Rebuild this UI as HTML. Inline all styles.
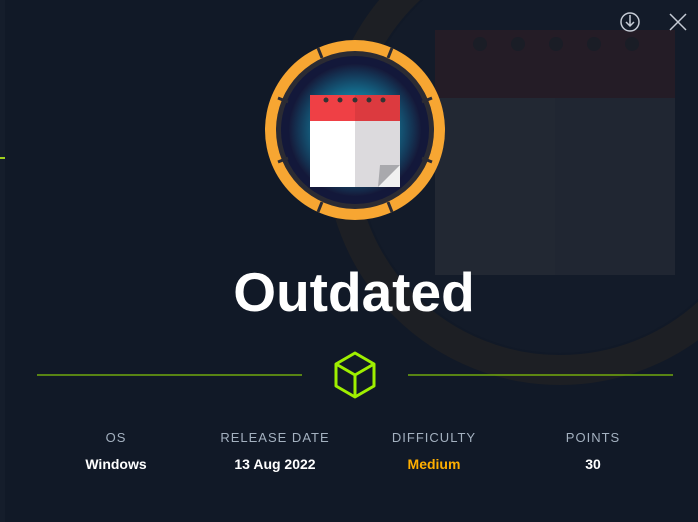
<!DOCTYPE html>
<html><head><meta charset="utf-8"><style>
html,body{margin:0;padding:0;width:698px;height:522px;overflow:hidden;background:#111927;font-family:"Liberation Sans",sans-serif}
.abs{position:absolute}
.lab{position:absolute;top:430px;width:160px;text-align:center;font-family:"Liberation Sans Narrow","Liberation Sans",sans-serif;font-size:13px;letter-spacing:1px;color:#a4b1c0}
.val{position:absolute;top:456px;width:160px;text-align:center;font-family:"Liberation Sans Narrow","Liberation Sans",sans-serif;font-size:14px;font-weight:bold;color:#fff}
</style></head><body>
<svg class="abs" style="left:0;top:0" width="698" height="522">
<defs>
<radialGradient id="glow" cx="50%" cy="50%" r="50%">
<stop offset="0" stop-color="#3fd6e8"/><stop offset="0.5" stop-color="#137a9a"/><stop offset="1" stop-color="#151a3a"/>
</radialGradient>
</defs>
<rect x="0" y="0" width="5" height="522" fill="#151d2b"/>
<rect x="0" y="157" width="5" height="2" fill="#9fcf1c"/>
<circle cx="560" cy="150" r="220" fill="none" stroke="#1d1f24" stroke-width="30"/>
<circle cx="560" cy="150" r="203" fill="#131b29"/>
<rect x="435" y="30" width="240" height="245" fill="#222833"/>
<rect x="435" y="30" width="240" height="68" fill="#241c26"/>
<rect x="555" y="98" width="120" height="177" fill="#202632"/>
<g fill="#1a1d26"><circle cx="480" cy="44" r="7"/><circle cx="518" cy="44" r="7"/><circle cx="556" cy="44" r="7"/><circle cx="594" cy="44" r="7"/><circle cx="632" cy="44" r="7"/></g>
<circle cx="355" cy="130" r="90" fill="#f7a632"/>
<circle cx="355" cy="130" r="79" fill="#2b2b33"/>
<circle cx="355" cy="130" r="74" fill="#13183a"/>
<circle cx="355" cy="130" r="66" fill="url(#glow)"/>
<g stroke="#2b2b33" stroke-width="3">
<line x1="318" y1="48" x2="322" y2="58"/><line x1="392" y1="48" x2="388" y2="58"/>
<line x1="432" y1="98" x2="422" y2="102"/><line x1="432" y1="162" x2="422" y2="158"/>
<line x1="392" y1="212" x2="388" y2="202"/><line x1="318" y1="212" x2="322" y2="202"/>
<line x1="278" y1="162" x2="288" y2="158"/><line x1="278" y1="98" x2="288" y2="102"/>
</g>
<rect x="310" y="95" width="90" height="92" fill="#fff"/>
<rect x="355" y="95" width="45" height="92" fill="#dcdadd"/>
<rect x="310" y="95" width="90" height="26" fill="#ef4045"/>
<rect x="355" y="95" width="45" height="26" fill="#dc3a3f"/>
<polygon points="378,187 400,165 400,187" fill="#f0f0f0"/>
<polygon points="378,187 400,165 380,165" fill="#a9a9ad"/>
<g fill="#333"><circle cx="326" cy="100" r="2.5"/><circle cx="340" cy="100" r="2.5"/><circle cx="355" cy="100" r="2.5"/><circle cx="369" cy="100" r="2.5"/><circle cx="383" cy="100" r="2.5"/></g>
<circle cx="630" cy="22" r="9" fill="none" stroke="#c5cbd5" stroke-width="1.5"/>
<path d="M630 15v11M626 22l4 4 4-4" fill="none" stroke="#c5cbd5" stroke-width="1.5"/>
<path d="M670 14l16 16M686 14l-16 16" stroke="#c5cbd5" stroke-width="1.5"/>
<line x1="37" y1="375" x2="302" y2="375" stroke="#9fef00" stroke-width="1"/>
<line x1="408" y1="375" x2="673" y2="375" stroke="#9fef00" stroke-width="1"/>
<path d="M355 353l19 11v22l-19 11l-19-11v-22z M336 364l19 11l19-11 M355 375v22" fill="none" stroke="#9fef00" stroke-width="3" stroke-linejoin="round"/>
</svg>
<div class="abs" style="left:0;width:708px;top:260px;text-align:center;font-size:55px;font-weight:bold;color:#fff">Outdated</div>
<div class="lab" style="left:36px">OS</div>
<div class="lab" style="left:195px">RELEASE DATE</div>
<div class="lab" style="left:354px">DIFFICULTY</div>
<div class="lab" style="left:513px">POINTS</div>
<div class="val" style="left:36px">Windows</div>
<div class="val" style="left:195px">13 Aug 2022</div>
<div class="val" style="left:354px;color:#ffaf00">Medium</div>
<div class="val" style="left:513px">30</div>
</body></html>
